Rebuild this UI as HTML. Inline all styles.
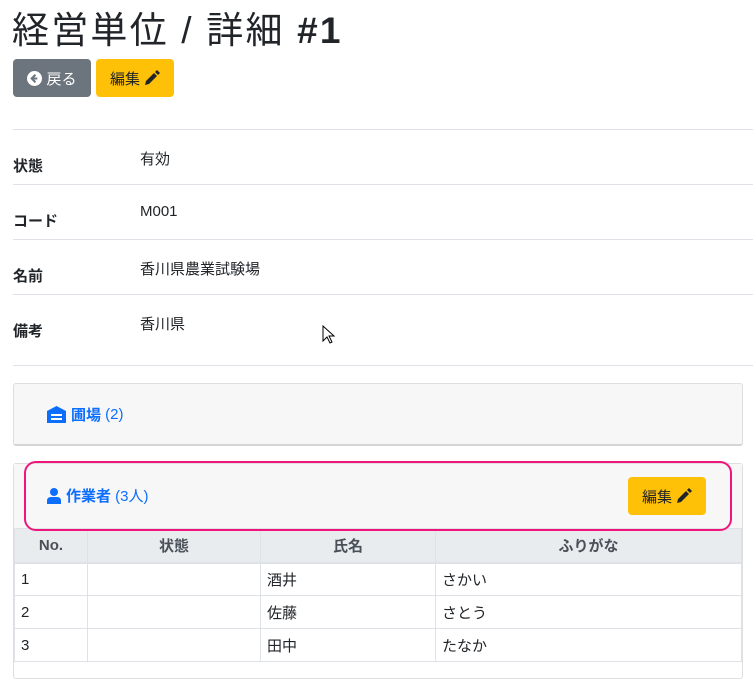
<!DOCTYPE html><html><head><meta charset="utf-8"><style>
*{box-sizing:border-box;margin:0;padding:0}
body{width:753px;height:687px;background:#fff;font-family:"Liberation Sans","Noto Sans CJK JP",sans-serif;color:#212529;position:relative;overflow:hidden;font-size:15px}
.a{position:absolute}
.btn{position:absolute;border-radius:4px;display:flex;align-items:center;justify-content:center;font-size:15px;height:38px}
.hr{position:absolute;left:13px;right:0;height:1px;background:#dee2e6}
.lab{position:absolute;left:13px;font-weight:bold;font-size:15px}
.val{position:absolute;left:140px;font-size:15px}
table{border-collapse:collapse;position:absolute;left:14px;top:528px;width:728px;font-size:15px}
td,th{border:1px solid #dee2e6;height:33px;padding:0 6px}
th{background:#e9ecef;color:#495057;text-align:center;height:34px;border-bottom:2px solid #dee2e6}
</style></head><body>
<div class="a" style="left:12px;top:8px;font-size:37px;line-height:46px;letter-spacing:2.2px">経営単位 / 詳細 <b>#1</b></div>
<div class="btn" style="left:13px;top:59px;width:78px;background:#6c757d;color:#fff"><svg width="15" height="15" viewBox="0 0 16 16" style="margin-right:4px"><circle cx="8" cy="8" r="8" fill="#fff"/><path d="M9 4L5 8l4 4M5 8h6" stroke="#6c757d" stroke-width="2.2" fill="none"/></svg>戻る</div>
<div class="btn" style="left:96px;top:59px;width:78px;background:#ffc107;color:#212529">編集<svg width="16" height="16" viewBox="0 0 16 16" style="margin-left:4px"><path d="M1 15l1-4 8-8 3 3-8 8z" fill="#212529"/><path d="M11 2l2-2 3 3-2 2z" fill="#212529"/></svg></div>
<div class="hr" style="top:129px"></div>
<div class="lab" style="top:155px">状態</div><div class="val" style="top:148px">有効</div>
<div class="hr" style="top:184px"></div>
<div class="lab" style="top:210px">コード</div><div class="val" style="top:203px">M001</div>
<div class="hr" style="top:239px"></div>
<div class="lab" style="top:265px">名前</div><div class="val" style="top:258px">香川県農業試験場</div>
<div class="hr" style="top:294px"></div>
<div class="lab" style="top:320px">備考</div><div class="val" style="top:313px">香川県</div>
<div class="hr" style="top:365px"></div>
<svg class="a" style="left:322px;top:325px" width="14" height="20" viewBox="0 0 14 20"><path d="M1 1v15l4-4 3 6 2-1-3-6h5z" fill="#fff" stroke="#000"/></svg>
<div class="a" style="left:13px;top:383px;width:730px;height:63px;background:#f7f7f7;border:1px solid #dfdfdf;border-bottom:2px solid #d5d5d5;border-radius:3px"></div>
<div class="a" style="left:47px;top:404px;color:#0d6efd;font-size:15px;display:flex;align-items:center"><svg width="19" height="17" viewBox="0 0 19 17" style="margin-right:5px"><path d="M0 5L9.5 0 19 5v12H0z" fill="#0d6efd"/><rect x="4" y="8" width="11" height="2" fill="#fff"/><rect x="4" y="12" width="11" height="2" fill="#fff"/></svg><b>圃場</b>&nbsp;(2)</div>
<div class="a" style="left:13px;top:463px;width:730px;height:216px;border:1px solid #dfdfdf;border-radius:3px"></div>
<div class="a" style="left:14px;top:464px;width:728px;height:64px;background:#f7f7f7"></div>
<div class="a" style="left:47px;top:485px;color:#0d6efd;font-size:15px;display:flex;align-items:center"><svg width="14" height="16" viewBox="0 0 14 16" style="margin-right:5px"><circle cx="7" cy="4" r="4" fill="#0d6efd"/><path d="M0 16v-3q0-4 4-4h6q4 0 4 4v3z" fill="#0d6efd"/></svg><b>作業者</b>&nbsp;(3人)</div>
<div class="btn" style="left:628px;top:477px;width:78px;background:#ffc107">編集<svg width="16" height="16" viewBox="0 0 16 16" style="margin-left:4px"><path d="M1 15l1-4 8-8 3 3-8 8z" fill="#212529"/><path d="M11 2l2-2 3 3-2 2z" fill="#212529"/></svg></div>
<table><tr><th style="width:73px">No.</th><th style="width:173px">状態</th><th style="width:175px">氏名</th><th>ふりがな</th></tr>
<tr><td>1</td><td></td><td>酒井</td><td>さかい</td></tr>
<tr><td>2</td><td></td><td>佐藤</td><td>さとう</td></tr>
<tr><td>3</td><td></td><td>田中</td><td>たなか</td></tr></table>
<div class="a" style="left:24px;top:461px;width:708px;height:70px;border:2px solid #f0157a;border-radius:12px"></div>
</body></html>
